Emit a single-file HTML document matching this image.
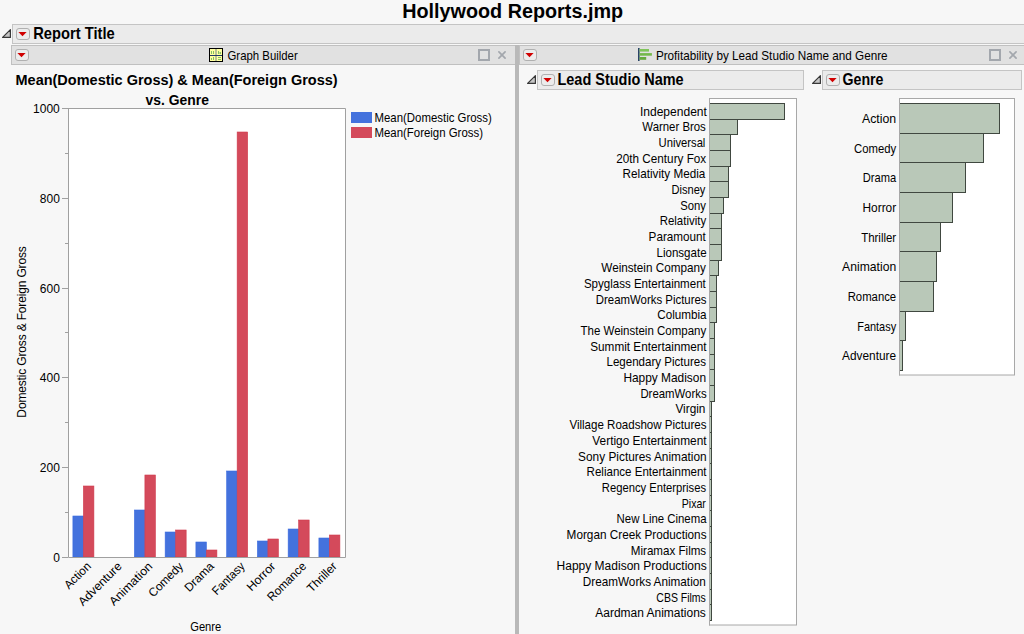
<!DOCTYPE html>
<html><head><meta charset="utf-8"><title>Hollywood Reports.jmp</title>
<style>
html,body{margin:0;padding:0;}
body{width:1024px;height:634px;overflow:hidden;background:#f7f7f7;font-family:"Liberation Sans",sans-serif;}
svg{position:absolute;left:0;top:0;}
text{font-family:"Liberation Sans",sans-serif;}
</style></head>
<body>
<svg width="1024" height="634" viewBox="0 0 1024 634">
<text transform="translate(402.20,18.3) scale(0.9424,1)" x="-0.00" y="0" font-size="21" font-weight="bold" fill="#000">Hollywood Reports.jmp</text>
<rect x="12.5" y="24.5" width="1020" height="19" fill="#ebebeb" stroke="#c4c4c4" stroke-width="1"/>
<path d="M2.6 37.4 L10.4 29.6 L10.4 37.4 Z" fill="#c6c6c6" stroke="#383838" stroke-width="1.2" stroke-linejoin="round"/>
<rect x="16.5" y="28.5" width="13" height="11" rx="2.5" fill="#ececec" stroke="#b0b0b0"/>
<path d="M18.4 31.9 L26.6 31.9 L22.5 36.2 Z" fill="#d00000"/>
<text transform="translate(33.20,38.9) scale(0.9433,1)" x="-0.00" y="0" font-size="15.6" font-weight="bold" fill="#000">Report Title</text>
<rect x="11.5" y="45.5" width="504" height="19" fill="#e1e1e1" stroke="#c0c0c0" stroke-width="1"/>
<rect x="15.5" y="49.5" width="13" height="11" rx="2.5" fill="#ececec" stroke="#b0b0b0"/>
<path d="M17.4 52.9 L25.6 52.9 L21.5 57.2 Z" fill="#d00000"/>
<rect x="209.5" y="48.5" width="13" height="13" fill="#ffffa0" stroke="#000"/>
<rect x="215.4" y="49" width="1.2" height="12" fill="#8d9a8d"/>
<rect x="210" y="55" width="12" height="1" fill="#1f3a66"/>
<rect x="211" y="51" width="1" height="3" fill="#84c064"/>
<rect x="213" y="51" width="1" height="3" fill="#84c064"/>
<rect x="218" y="51" width="1" height="3" fill="#84c064"/>
<rect x="219.5" y="52" width="1.5" height="2" fill="#84c064"/>
<rect x="211" y="58" width="1" height="2" fill="#84c064"/>
<rect x="213" y="57" width="1" height="3" fill="#84c064"/>
<rect x="218" y="57" width="3" height="1" fill="#84c064"/>
<rect x="218" y="59" width="3" height="1" fill="#84c064"/>
<text transform="translate(227.50,59.8) scale(0.9262,1)" x="-0.00" y="0" font-size="12.3" fill="#000">Graph Builder</text>
<rect x="479" y="50" width="10" height="10" fill="none" stroke="#a3a7ad" stroke-width="2"/>
<line x1="498.9" y1="51.9" x2="505.1" y2="58.1" stroke="#a3a7ad" stroke-width="1.7" stroke-linecap="round"/>
<line x1="505.1" y1="51.9" x2="498.9" y2="58.1" stroke="#a3a7ad" stroke-width="1.7" stroke-linecap="round"/>
<rect x="515" y="45" width="4" height="589" fill="#b9b9b9"/>
<rect x="519.5" y="45.5" width="510" height="19" fill="#e1e1e1" stroke="#c0c0c0" stroke-width="1"/>
<rect x="523.5" y="49.5" width="13" height="11" rx="2.5" fill="#ececec" stroke="#b0b0b0"/>
<path d="M525.4 52.9 L533.6 52.9 L529.5 57.2 Z" fill="#d00000"/>
<rect x="638" y="48" width="1.6" height="13" fill="#2a4466"/>
<rect x="639.5" y="49" width="9.5" height="2.6" fill="#80c45a"/>
<rect x="639.5" y="53.1" width="12.4" height="2.6" fill="#74b84a"/>
<rect x="639.5" y="57" width="6.7" height="2.8" fill="#66aa3e"/>
<text transform="translate(655.90,59.8) scale(0.9528,1)" x="-0.00" y="0" font-size="12.3" fill="#000">Profitability by Lead Studio Name and Genre</text>
<rect x="990" y="50" width="10" height="10" fill="none" stroke="#a3a7ad" stroke-width="2"/>
<line x1="1009.9" y1="51.9" x2="1016.1" y2="58.1" stroke="#a3a7ad" stroke-width="1.7" stroke-linecap="round"/>
<line x1="1016.1" y1="51.9" x2="1009.9" y2="58.1" stroke="#a3a7ad" stroke-width="1.7" stroke-linecap="round"/>
<text transform="translate(15.50,84.8) scale(0.9354,1)" x="-0.00" y="0" font-size="15.5" font-weight="bold" fill="#000">Mean(Domestic Gross) &amp; Mean(Foreign Gross)</text>
<text transform="translate(145.60,104.7) scale(0.8960,1)" x="-0.00" y="0" font-size="15.5" font-weight="bold" fill="#000">vs. Genre</text>
<rect x="68" y="108" width="277" height="449" fill="#fff"/>
<rect x="72.90" y="516" width="10.5" height="41" fill="#4472dd" stroke="#3b6ce0" stroke-width="0.6"/>
<rect x="83.40" y="486" width="10.5" height="71" fill="#d44a5b" stroke="#cf3b4d" stroke-width="0.6"/>
<rect x="134.40" y="510" width="10.5" height="47" fill="#4472dd" stroke="#3b6ce0" stroke-width="0.6"/>
<rect x="144.90" y="475" width="10.5" height="82" fill="#d44a5b" stroke="#cf3b4d" stroke-width="0.6"/>
<rect x="165.15" y="532" width="10.5" height="25" fill="#4472dd" stroke="#3b6ce0" stroke-width="0.6"/>
<rect x="175.65" y="530" width="10.5" height="27" fill="#d44a5b" stroke="#cf3b4d" stroke-width="0.6"/>
<rect x="195.90" y="542" width="10.5" height="15" fill="#4472dd" stroke="#3b6ce0" stroke-width="0.6"/>
<rect x="206.40" y="550" width="10.5" height="7" fill="#d44a5b" stroke="#cf3b4d" stroke-width="0.6"/>
<rect x="226.65" y="471" width="10.5" height="86" fill="#4472dd" stroke="#3b6ce0" stroke-width="0.6"/>
<rect x="237.15" y="132" width="10.5" height="425" fill="#d44a5b" stroke="#cf3b4d" stroke-width="0.6"/>
<rect x="257.40" y="541" width="10.5" height="16" fill="#4472dd" stroke="#3b6ce0" stroke-width="0.6"/>
<rect x="267.90" y="539" width="10.5" height="18" fill="#d44a5b" stroke="#cf3b4d" stroke-width="0.6"/>
<rect x="288.15" y="529" width="10.5" height="28" fill="#4472dd" stroke="#3b6ce0" stroke-width="0.6"/>
<rect x="298.65" y="520" width="10.5" height="37" fill="#d44a5b" stroke="#cf3b4d" stroke-width="0.6"/>
<rect x="318.90" y="538" width="10.5" height="19" fill="#4472dd" stroke="#3b6ce0" stroke-width="0.6"/>
<rect x="329.40" y="535" width="10.5" height="22" fill="#d44a5b" stroke="#cf3b4d" stroke-width="0.6"/>
<path d="M68.5 108 V557.5 H345.5 V108.5 H68" fill="none" stroke="#a0a0a0" stroke-width="1"/>
<line x1="62" y1="557.5" x2="68" y2="557.5" stroke="#a0a0a0"/>
<text x="53.15" y="561.8" font-size="12" fill="#000">0</text>
<line x1="65" y1="512.5" x2="68" y2="512.5" stroke="#a0a0a0"/>
<line x1="62" y1="467.5" x2="68" y2="467.5" stroke="#a0a0a0"/>
<text x="39.80" y="471.8" font-size="12" fill="#000">200</text>
<line x1="65" y1="422.5" x2="68" y2="422.5" stroke="#a0a0a0"/>
<line x1="62" y1="377.5" x2="68" y2="377.5" stroke="#a0a0a0"/>
<text x="39.80" y="381.8" font-size="12" fill="#000">400</text>
<line x1="65" y1="332.5" x2="68" y2="332.5" stroke="#a0a0a0"/>
<line x1="62" y1="288.5" x2="68" y2="288.5" stroke="#a0a0a0"/>
<text x="39.80" y="292.8" font-size="12" fill="#000">600</text>
<line x1="65" y1="243.5" x2="68" y2="243.5" stroke="#a0a0a0"/>
<line x1="62" y1="198.5" x2="68" y2="198.5" stroke="#a0a0a0"/>
<text x="39.80" y="202.8" font-size="12" fill="#000">800</text>
<line x1="65" y1="153.5" x2="68" y2="153.5" stroke="#a0a0a0"/>
<line x1="62" y1="108.5" x2="68" y2="108.5" stroke="#a0a0a0"/>
<text x="33.10" y="112.8" font-size="12" fill="#000">1000</text>
<text transform="translate(91.70,567) rotate(-45) scale(0.967,1)" text-anchor="end" font-size="12" fill="#000">Action</text>
<text transform="translate(122.45,567) rotate(-45) scale(1.02,1)" text-anchor="end" font-size="12" fill="#000">Adventure</text>
<text transform="translate(153.20,567) rotate(-45) scale(1.04,1)" text-anchor="end" font-size="12" fill="#000">Animation</text>
<text transform="translate(183.95,567) rotate(-45) scale(0.975,1)" text-anchor="end" font-size="12" fill="#000">Comedy</text>
<text transform="translate(214.70,567) rotate(-45) scale(1.0,1)" text-anchor="end" font-size="12" fill="#000">Drama</text>
<text transform="translate(245.45,567) rotate(-45) scale(0.95,1)" text-anchor="end" font-size="12" fill="#000">Fantasy</text>
<text transform="translate(276.20,567) rotate(-45) scale(1.03,1)" text-anchor="end" font-size="12" fill="#000">Horror</text>
<text transform="translate(306.95,567) rotate(-45) scale(0.96,1)" text-anchor="end" font-size="12" fill="#000">Romance</text>
<text transform="translate(337.70,567) rotate(-45) scale(1.0,1)" text-anchor="end" font-size="12" fill="#000">Thriller</text>
<text transform="translate(26.1,332) rotate(-90)" text-anchor="middle" font-size="12" letter-spacing="-0.16" fill="#000">Domestic Gross &amp; Foreign Gross</text>
<text transform="translate(190.20,630.8) scale(0.9325,1)" x="-0.00" y="0" font-size="12" fill="#000">Genre</text>
<rect x="351" y="112" width="21" height="11" fill="#4472dd"/>
<rect x="351" y="127" width="21" height="11" fill="#d44a5b"/>
<text transform="translate(374.50,122.1) scale(0.9284,1)" x="-0.00" y="0" font-size="12.3" fill="#000">Mean(Domestic Gross)</text>
<text transform="translate(374.50,137.1) scale(0.9290,1)" x="-0.00" y="0" font-size="12.3" fill="#000">Mean(Foreign Gross)</text>
<path d="M527.6 83.4 L535.4 75.6 L535.4 83.4 Z" fill="#c6c6c6" stroke="#383838" stroke-width="1.2" stroke-linejoin="round"/>
<rect x="537.5" y="70.5" width="266" height="19" fill="#ebebeb" stroke="#c4c4c4" stroke-width="1"/>
<rect x="541.5" y="74.5" width="13" height="11" rx="2.5" fill="#ececec" stroke="#b0b0b0"/>
<path d="M543.4 77.9 L551.6 77.9 L547.5 82.2 Z" fill="#d00000"/>
<text transform="translate(557.50,84.9) scale(0.9276,1)" x="-0.00" y="0" font-size="15.6" font-weight="bold" fill="#000">Lead Studio Name</text>
<path d="M812.6 83.4 L820.4 75.6 L820.4 83.4 Z" fill="#c6c6c6" stroke="#383838" stroke-width="1.2" stroke-linejoin="round"/>
<rect x="822.5" y="70.5" width="199" height="19" fill="#ebebeb" stroke="#c4c4c4" stroke-width="1"/>
<rect x="826.5" y="74.5" width="13" height="11" rx="2.5" fill="#ececec" stroke="#b0b0b0"/>
<path d="M828.4 77.9 L836.6 77.9 L832.5 82.2 Z" fill="#d00000"/>
<text transform="translate(842.50,84.9) scale(0.9091,1)" x="-0.00" y="0" font-size="15.6" font-weight="bold" fill="#000">Genre</text>
<rect x="709.5" y="98.5" width="87" height="526.5" fill="#fff" stroke="#a8a8a8" stroke-width="1"/>
<rect x="709.5" y="103.5" width="75.0" height="16" fill="#b9c8b8" stroke="#404840" stroke-width="1"/>
<text transform="translate(639.90,115.70) scale(1.0052,1)" x="-0.00" y="0" font-size="12" fill="#000">Independent</text>
<rect x="709.5" y="119.5" width="28.0" height="15" fill="#b9c8b8" stroke="#404840" stroke-width="1"/>
<text transform="translate(642.30,131.37) scale(0.9507,1)" x="-0.00" y="0" font-size="12" fill="#000">Warner Bros</text>
<rect x="709.5" y="134.5" width="21.0" height="16" fill="#b9c8b8" stroke="#404840" stroke-width="1"/>
<text transform="translate(658.60,147.05) scale(0.9360,1)" x="-0.00" y="0" font-size="12" fill="#000">Universal</text>
<rect x="709.5" y="150.5" width="21.0" height="16" fill="#b9c8b8" stroke="#404840" stroke-width="1"/>
<text transform="translate(616.30,162.72) scale(0.9766,1)" x="-0.00" y="0" font-size="12" fill="#000">20th Century Fox</text>
<rect x="709.5" y="166.5" width="19.0" height="15" fill="#b9c8b8" stroke="#404840" stroke-width="1"/>
<text transform="translate(622.60,178.39) scale(0.9770,1)" x="-0.00" y="0" font-size="12" fill="#000">Relativity Media</text>
<rect x="709.5" y="181.5" width="19.0" height="16" fill="#b9c8b8" stroke="#404840" stroke-width="1"/>
<text transform="translate(671.50,194.06) scale(0.9237,1)" x="-0.00" y="0" font-size="12" fill="#000">Disney</text>
<rect x="709.5" y="197.5" width="14.0" height="16" fill="#b9c8b8" stroke="#404840" stroke-width="1"/>
<text transform="translate(680.20,209.74) scale(0.9397,1)" x="-0.00" y="0" font-size="12" fill="#000">Sony</text>
<rect x="709.5" y="213.5" width="12.0" height="15" fill="#b9c8b8" stroke="#404840" stroke-width="1"/>
<text transform="translate(659.70,225.41) scale(0.9548,1)" x="-0.00" y="0" font-size="12" fill="#000">Relativity</text>
<rect x="709.5" y="228.5" width="12.0" height="16" fill="#b9c8b8" stroke="#404840" stroke-width="1"/>
<text transform="translate(648.60,241.08) scale(0.9761,1)" x="-0.00" y="0" font-size="12" fill="#000">Paramount</text>
<rect x="709.5" y="244.5" width="12.0" height="16" fill="#b9c8b8" stroke="#404840" stroke-width="1"/>
<text transform="translate(656.50,256.75) scale(0.9645,1)" x="-0.00" y="0" font-size="12" fill="#000">Lionsgate</text>
<rect x="709.5" y="260.5" width="9.0" height="15" fill="#b9c8b8" stroke="#404840" stroke-width="1"/>
<text transform="translate(601.30,272.43) scale(0.9762,1)" x="-0.00" y="0" font-size="12" fill="#000">Weinstein Company</text>
<rect x="709.5" y="275.5" width="7.0" height="16" fill="#b9c8b8" stroke="#404840" stroke-width="1"/>
<text transform="translate(583.90,288.10) scale(0.9625,1)" x="-0.00" y="0" font-size="12" fill="#000">Spyglass Entertainment</text>
<rect x="709.5" y="291.5" width="7.0" height="16" fill="#b9c8b8" stroke="#404840" stroke-width="1"/>
<text transform="translate(595.80,303.77) scale(0.9523,1)" x="-0.00" y="0" font-size="12" fill="#000">DreamWorks Pictures</text>
<rect x="709.5" y="307.5" width="7.0" height="15" fill="#b9c8b8" stroke="#404840" stroke-width="1"/>
<text transform="translate(657.30,319.45) scale(0.9744,1)" x="-0.00" y="0" font-size="12" fill="#000">Columbia</text>
<rect x="709.5" y="322.5" width="5.0" height="16" fill="#b9c8b8" stroke="#404840" stroke-width="1"/>
<text transform="translate(580.50,335.12) scale(0.9581,1)" x="-0.00" y="0" font-size="12" fill="#000">The Weinstein Company</text>
<rect x="709.5" y="338.5" width="5.0" height="16" fill="#b9c8b8" stroke="#404840" stroke-width="1"/>
<text transform="translate(590.20,350.79) scale(0.9815,1)" x="-0.00" y="0" font-size="12" fill="#000">Summit Entertainment</text>
<rect x="709.5" y="354.5" width="5.0" height="15" fill="#b9c8b8" stroke="#404840" stroke-width="1"/>
<text transform="translate(606.50,366.46) scale(0.9642,1)" x="-0.00" y="0" font-size="12" fill="#000">Legendary Pictures</text>
<rect x="709.5" y="369.5" width="5.0" height="16" fill="#b9c8b8" stroke="#404840" stroke-width="1"/>
<text transform="translate(623.40,382.14) scale(0.9928,1)" x="-0.00" y="0" font-size="12" fill="#000">Happy Madison</text>
<rect x="709.5" y="385.5" width="5.0" height="16" fill="#b9c8b8" stroke="#404840" stroke-width="1"/>
<text transform="translate(640.40,397.81) scale(0.9499,1)" x="-0.00" y="0" font-size="12" fill="#000">DreamWorks</text>
<rect x="709.5" y="401.5" width="2.0" height="15" fill="#b9c8b8" stroke="#404840" stroke-width="1"/>
<text transform="translate(675.40,413.48) scale(0.9852,1)" x="-0.00" y="0" font-size="12" fill="#000">Virgin</text>
<rect x="709.5" y="416.5" width="2.0" height="16" fill="#b9c8b8" stroke="#404840" stroke-width="1"/>
<text transform="translate(569.40,429.15) scale(0.9632,1)" x="-0.00" y="0" font-size="12" fill="#000">Village Roadshow Pictures</text>
<rect x="709.5" y="432.5" width="2.0" height="16" fill="#b9c8b8" stroke="#404840" stroke-width="1"/>
<text transform="translate(592.30,444.83) scale(0.9913,1)" x="-0.00" y="0" font-size="12" fill="#000">Vertigo Entertainment</text>
<rect x="709.5" y="448.5" width="2.0" height="15" fill="#b9c8b8" stroke="#404840" stroke-width="1"/>
<text transform="translate(578.10,460.50) scale(0.9889,1)" x="-0.00" y="0" font-size="12" fill="#000">Sony Pictures Animation</text>
<rect x="709.5" y="463.5" width="2.0" height="16" fill="#b9c8b8" stroke="#404840" stroke-width="1"/>
<text transform="translate(586.60,476.17) scale(0.9627,1)" x="-0.00" y="0" font-size="12" fill="#000">Reliance Entertainment</text>
<rect x="709.5" y="479.5" width="2.0" height="16" fill="#b9c8b8" stroke="#404840" stroke-width="1"/>
<text transform="translate(601.80,491.85) scale(0.9372,1)" x="-0.00" y="0" font-size="12" fill="#000">Regency Enterprises</text>
<rect x="709.5" y="495.5" width="2.0" height="15" fill="#b9c8b8" stroke="#404840" stroke-width="1"/>
<text transform="translate(681.80,507.52) scale(0.8812,1)" x="-0.00" y="0" font-size="12" fill="#000">Pixar</text>
<rect x="709.5" y="510.5" width="2.0" height="16" fill="#b9c8b8" stroke="#404840" stroke-width="1"/>
<text transform="translate(616.60,523.19) scale(0.9509,1)" x="-0.00" y="0" font-size="12" fill="#000">New Line Cinema</text>
<rect x="709.5" y="526.5" width="2.0" height="16" fill="#b9c8b8" stroke="#404840" stroke-width="1"/>
<text transform="translate(566.60,538.86) scale(0.9814,1)" x="-0.00" y="0" font-size="12" fill="#000">Morgan Creek Productions</text>
<rect x="709.5" y="542.5" width="2.0" height="15" fill="#b9c8b8" stroke="#404840" stroke-width="1"/>
<text transform="translate(630.80,554.54) scale(0.9667,1)" x="-0.00" y="0" font-size="12" fill="#000">Miramax Films</text>
<rect x="709.5" y="557.5" width="2.0" height="16" fill="#b9c8b8" stroke="#404840" stroke-width="1"/>
<text transform="translate(556.60,570.21) scale(1.0000,1)" x="-0.00" y="0" font-size="12" fill="#000">Happy Madison Productions</text>
<rect x="709.5" y="573.5" width="2.0" height="16" fill="#b9c8b8" stroke="#404840" stroke-width="1"/>
<text transform="translate(582.80,585.88) scale(0.9785,1)" x="-0.00" y="0" font-size="12" fill="#000">DreamWorks Animation</text>
<rect x="709.5" y="589.5" width="2.0" height="15" fill="#b9c8b8" stroke="#404840" stroke-width="1"/>
<text transform="translate(656.30,601.55) scale(0.8756,1)" x="-0.00" y="0" font-size="12" fill="#000">CBS Films</text>
<rect x="709.5" y="604.5" width="2.0" height="16" fill="#b9c8b8" stroke="#404840" stroke-width="1"/>
<text transform="translate(595.30,617.23) scale(0.9986,1)" x="-0.00" y="0" font-size="12" fill="#000">Aardman Animations</text>
<line x1="709.5" y1="98" x2="709.5" y2="625.5" stroke="#a8a8a8"/>
<rect x="899.5" y="98.5" width="115" height="276.5" fill="#fff" stroke="#a8a8a8" stroke-width="1"/>
<rect x="899.5" y="103.5" width="100.0" height="30" fill="#b9c8b8" stroke="#404840" stroke-width="1"/>
<text transform="translate(862.00,122.90) scale(1.0255,1)" x="-0.00" y="0" font-size="12" fill="#000">Action</text>
<rect x="899.5" y="133.5" width="84.0" height="29" fill="#b9c8b8" stroke="#404840" stroke-width="1"/>
<text transform="translate(854.00,152.58) scale(0.9441,1)" x="-0.00" y="0" font-size="12" fill="#000">Comedy</text>
<rect x="899.5" y="162.5" width="66.0" height="30" fill="#b9c8b8" stroke="#404840" stroke-width="1"/>
<text transform="translate(862.70,182.26) scale(0.9293,1)" x="-0.00" y="0" font-size="12" fill="#000">Drama</text>
<rect x="899.5" y="192.5" width="53.0" height="30" fill="#b9c8b8" stroke="#404840" stroke-width="1"/>
<text transform="translate(862.50,211.93) scale(0.9912,1)" x="-0.00" y="0" font-size="12" fill="#000">Horror</text>
<rect x="899.5" y="222.5" width="41.0" height="29" fill="#b9c8b8" stroke="#404840" stroke-width="1"/>
<text transform="translate(861.20,241.61) scale(0.9550,1)" x="-0.00" y="0" font-size="12" fill="#000">Thriller</text>
<rect x="899.5" y="251.5" width="37.0" height="30" fill="#b9c8b8" stroke="#404840" stroke-width="1"/>
<text transform="translate(842.10,271.29) scale(1.0141,1)" x="-0.00" y="0" font-size="12" fill="#000">Animation</text>
<rect x="899.5" y="281.5" width="34.0" height="30" fill="#b9c8b8" stroke="#404840" stroke-width="1"/>
<text transform="translate(847.70,300.97) scale(0.9445,1)" x="-0.00" y="0" font-size="12" fill="#000">Romance</text>
<rect x="899.5" y="311.5" width="6.0" height="29" fill="#b9c8b8" stroke="#404840" stroke-width="1"/>
<text transform="translate(857.20,330.64) scale(0.9133,1)" x="-0.00" y="0" font-size="12" fill="#000">Fantasy</text>
<rect x="899.5" y="340.5" width="3.0" height="30" fill="#b9c8b8" stroke="#404840" stroke-width="1"/>
<text transform="translate(842.10,360.32) scale(0.9890,1)" x="-0.00" y="0" font-size="12" fill="#000">Adventure</text>
<line x1="899.5" y1="98" x2="899.5" y2="375.5" stroke="#a8a8a8"/>
</svg>
</body></html>
